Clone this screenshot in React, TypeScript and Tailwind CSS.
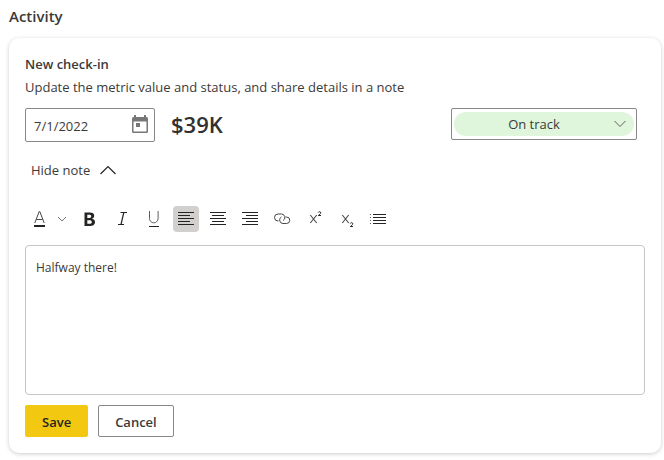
import React, { useState } from "react";
import type { ReactNode } from "react";

function ToolButton({
  label,
  active = false,
  children,
}: {
  label: string;
  active?: boolean;
  children: ReactNode;
}) {
  return (
    <button
      type="button"
      aria-label={label}
      aria-pressed={active}
      className={`flex size-[26px] items-center justify-center rounded ${active ? "bg-[#d2d0ce]" : ""}`}
    >
      {children}
    </button>
  );
}

function Glyph({ children }: { children: ReactNode }) {
  return (
    <svg
      aria-hidden="true"
      className="size-5"
      viewBox="0 0 20 20"
      fill="none"
      stroke="#252423"
      strokeWidth="1"
    >
      {children}
    </svg>
  );
}

function Toolbar() {
  return (
    <div role="toolbar" aria-label="Note formatting" className="mt-[26px] flex items-center gap-1.5 pl-0.5">
      <div className="flex items-center">
        <ToolButton label="Font color">
          <Glyph>
            <path d="M4.800 14 9.200 2.500h.6L14.200 14M6.300 10.500h6.400" stroke="#484644" />
            <path d="M4 16h11v2H4z" fill="#252423" stroke="none" />
          </Glyph>
        </ToolButton>
        <button type="button" aria-label="More font colors" className="flex h-[26px] w-[18px] items-center justify-center">
          <svg aria-hidden="true" className="h-2 w-2.5" viewBox="0 0 10 8" fill="none" stroke="#797775">
            <path d="m1 2 4 4 4-4" />
          </svg>
        </button>
      </div>
      <ToolButton label="Bold">
        <Glyph>
          <path
            d="M4.500 3.500h5.300c2.900 0 4.400 1.100 4.400 3.300 0 1.500-.9 2.500-2.300 3 1.900.3 3.100 1.500 3.100 3.300 0 2.500-1.900 3.900-5 3.900H4.500zM7.300 5.700v3.300h1.800c1.400 0 2.100-.6 2.100-1.800 0-1-.7-1.500-2-1.500zM7.300 11.200v3.600h2.200c1.500 0 2.300-.7 2.300-1.900s-.8-1.700-2.400-1.700z"
            fill="#252423"
            stroke="none"
            fillRule="evenodd"
          />
        </Glyph>
      </ToolButton>
      <ToolButton label="Italic">
        <Glyph>
          <path d="M8.500 3.500h6.500M6 15.500h6M11.800 3.500 9 15.500" strokeWidth="1.200" />
        </Glyph>
      </ToolButton>
      <ToolButton label="Underline">
        <Glyph>
          <path d="M5.500 2v7.500a4.300 4.300 0 0 0 8.600 0V2" stroke="#605e5c" />
          <path d="M5 17.500h10" />
        </Glyph>
      </ToolButton>
      <ToolButton label="Align left" active>
        <Glyph>
          <path d="M2 3.500h16M2 6.500h12M2 9.500h16M2 12.500h12M2 15.500h16" />
        </Glyph>
      </ToolButton>
      <ToolButton label="Align center">
        <Glyph>
          <path d="M2 3.500h16M4 6.500h12M2 9.500h16M4 12.500h12M2 15.500h16" />
        </Glyph>
      </ToolButton>
      <ToolButton label="Align right">
        <Glyph>
          <path d="M2 3.500h16M6 6.500h12M2 9.500h16M6 12.500h12M2 15.500h16" />
        </Glyph>
      </ToolButton>
      <ToolButton label="Insert link">
        <Glyph>
          <path
            d="M6.500 12H6a3.500 3.500 0 1 1 0-7h3.500a3.500 3.500 0 0 1 1.500 6.600M13.500 8h1a3.250 3.250 0 0 1 0 6.500H11a3.500 3.500 0 0 1-1.500-6.600"
            stroke="#484644"
          />
        </Glyph>
      </ToolButton>
      <ToolButton label="Superscript">
        <Glyph>
          <path d="m6.300 6 6.400 8M12.700 6l-6.400 8" stroke="#484644" strokeWidth="1.100" />
          <path d="M14.200 3.500c.3-1 2.600-1.200 2.600.3 0 1-1.300 1.600-2.500 2.700H17" />
        </Glyph>
      </ToolButton>
      <ToolButton label="Subscript">
        <Glyph>
          <path d="m6.300 6 6.400 8M12.700 6l-6.400 8" stroke="#484644" strokeWidth="1.100" />
          <path d="M14.200 14.500c.3-1 2.600-1.200 2.600.3 0 1-1.300 1.600-2.500 2.700H17" />
        </Glyph>
      </ToolButton>
      <ToolButton label="Bulleted list">
        <Glyph>
          <path d="M5 5.500h13M5 8.500h13M5 11.500h13M5 14.500h13" />
          <path d="M2 5.500h1M2 8.500h1M2 11.500h1M2 14.500h1" stroke="#605e5c" />
        </Glyph>
      </ToolButton>
    </div>
  );
}

export default function App() {
  const [date, setDate] = useState("7/1/2022");
  const [note, setNote] = useState("Halfway there!");

  return (
    <main className="bg-white pt-1.5 pr-[3px] pb-2 pl-[9px] font-['Segoe_UI','Open_Sans',sans-serif] text-[13px] leading-5 text-[#3b3a39]">
      <h1 className="text-[15px] leading-5 font-semibold">Activity</h1>

      <section className="mt-3 rounded-[10px] bg-white p-4 shadow-[0_1px_4px_rgba(0,0,0,0.2)]">
        <h2 className="font-semibold">New check-in</h2>
        <p className="mt-[3px]">Update the metric value and status, and share details in a note</p>

        <div className="mt-[11px] flex items-start">
          <div className="flex h-[34px] w-[130px] items-center rounded-xs border border-[#8a8886] pr-1 pl-2">
            <input
              aria-label="Check-in date"
              className="min-w-0 flex-1 pt-0.5 outline-none"
              value={date}
              onChange={(e) => setDate(e.target.value)}
            />
            <button type="button" aria-label="Open calendar">
              <svg aria-hidden="true" className="size-5" viewBox="0 0 20 20" fill="#797775">
                <path
                  fillRule="evenodd"
                  d="M4 0h2v2h8V0h2v2h.5A1.500 1.500 0 0 1 18 3.500v13a1.500 1.500 0 0 1-1.500 1.500h-13A1.500 1.500 0 0 1 2 16.500v-13A1.500 1.500 0 0 1 3.500 2H4zM3.500 6.500v10h13v-10z"
                />
                <path d="M6 8h4v4H6z" />
              </svg>
            </button>
          </div>
          <p className="ml-4 text-[22px] leading-8 font-semibold text-[#323130]">$39K</p>
          <div className="relative mr-2 ml-auto flex h-8 w-[186px] items-center rounded-xs border border-[#8a8886] px-0.5">
            <select
              aria-label="Status"
              defaultValue="On track"
              className="h-6 w-full appearance-none rounded-full bg-[#dff6dd] pr-10 pl-5 text-center outline-none"
            >
              <option>On track</option>
              <option>At risk</option>
              <option>Behind</option>
            </select>
            <svg
              aria-hidden="true"
              className="pointer-events-none absolute right-2.5 h-2 w-3"
              viewBox="0 0 12 8"
              fill="none"
              stroke="#605e5c"
            >
              <path d="m.5 1 5.500 5.500L11.500 1" />
            </svg>
          </div>
        </div>

        <button type="button" aria-expanded="true" className="mt-[18px] ml-1.5 flex items-center gap-2.5">
          Hide note
          <svg aria-hidden="true" className="h-2.5 w-4" viewBox="0 0 16 10" fill="none" stroke="#252423" strokeWidth="1.200">
            <path d="m.5 9 7.500-7.500L15.500 9" />
          </svg>
        </button>

        <Toolbar />

        <textarea
          aria-label="Note"
          className="mt-[13px] block h-[150px] w-full resize-none rounded-sm border border-[#c8c6c4] px-2.5 py-3 text-[12px] leading-5 outline-none"
          value={note}
          onChange={(e) => setNote(e.target.value)}
        />

        <div className="mt-2.5 flex gap-2.5">
          <button type="button" className="h-8 rounded-xs border border-[#f2c811] bg-[#f2c811] px-4 pt-0.5 font-semibold text-[#252423]">
            Save
          </button>
          <button type="button" className="h-8 rounded-xs border border-[#8a8886] bg-white px-4 pt-0.5 font-semibold">
            Cancel
          </button>
        </div>
      </section>
    </main>
  );
}
